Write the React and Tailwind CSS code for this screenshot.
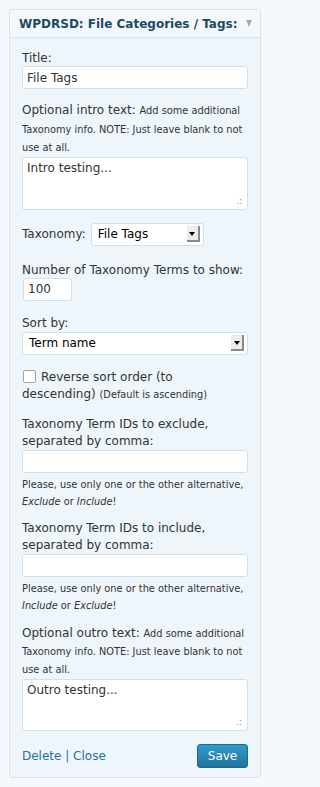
import React from "react";

const font = { fontFamily: '"DejaVu Sans", sans-serif' };

function Grip() {
  return (
    <span className="absolute bottom-[3px] right-[5px] text-[8px] leading-none text-[#777]">.:</span>
  );
}

function SelectBox({ value, className }) {
  return (
    <div className={"flex items-center rounded-[3px] border border-[#cfe0ec] bg-white pl-[6px] pr-[3px] " + className}>
      <span className="flex-1 text-[12px] leading-none text-black">{value}</span>
      <span className="relative h-[16px] w-[13px] border-b-[2px] border-r-[2px] border-b-[#8a8a8a] border-r-[#8a8a8a] bg-[#ececec]">
        <span className="absolute left-[2.5px] top-[6px] h-0 w-0 border-l-[3.5px] border-r-[3.5px] border-t-[4px] border-l-transparent border-r-transparent border-t-black" />
      </span>
    </div>
  );
}

export default function App() {
  return (
    <div className="min-h-[787px] bg-[#f5f9fd] pl-[9px] pt-[9px]" style={font}>
      <div className="w-[252px] rounded-[3px] border border-[#d6e4ee] bg-[#eef5fb] text-[12px] text-[#333]">
        <div className="flex h-[28px] items-center border-b border-[#d6e4ee] bg-[#f2f8fc] pl-[9px] pr-[8px]">
          <span className="flex-1 whitespace-nowrap text-[12px] font-bold text-[#1d4a66]">WPDRSD: File Categories / Tags:</span>
          <span className="h-0 w-0 border-l-[3.5px] border-r-[3.5px] border-t-[7px] border-l-transparent border-r-transparent border-t-[#aaa]" />
        </div>
        <div className="px-[12px] pb-[9px] pt-[12px]">
          <div className="leading-[16px]">Title:</div>
          <div className="flex h-[23px] items-center rounded-[3px] border border-[#cfe0ec] bg-white pl-[4px]">File Tags</div>

          <div className="mt-[12px] leading-[18.5px]">
            Optional intro text: <span className="text-[9.8px] leading-none">Add some additional Taxonomy info. NOTE: Just leave blank to not use at all.</span>
          </div>
          <div className="relative h-[53px] rounded-[3px] border border-[#cfe0ec] bg-white pl-[4px] pt-[2px] leading-[16px]">
            Intro testing...
            <Grip />
          </div>

          <div className="mt-[13px] flex items-center">
            <span>Taxonomy:</span>
            <SelectBox value="File Tags" className="ml-[5px] h-[23px] w-[113px]" />
          </div>

          <div className="mt-[16px] leading-[16px]">Number of Taxonomy Terms to show:</div>
          <div className="ml-px flex h-[23px] w-[49px] items-center rounded-[3px] border border-[#cfe0ec] bg-white pl-[4px]">100</div>

          <div className="mt-[14px] leading-[16px]">Sort by:</div>
          <SelectBox value="Term name" className="mt-px h-[23px] w-[226px]" />

          <div className="mt-[13px] leading-[17px]">
            <span className="mr-[5px] ml-px inline-block h-[13px] w-[13px] translate-y-[2px] rounded-[2px] border border-[#a0a0a0] bg-white" />
            Reverse sort order (to descending) <span className="text-[9.8px] leading-none">(Default is ascending)</span>
          </div>

          <div className="mt-[13px] leading-[17px]">Taxonomy Term IDs to exclude, separated by comma:</div>
          <div className="h-[23px] rounded-[3px] border border-[#cfe0ec] bg-white" />
          <div className="mt-[3px] text-[9.8px] leading-[17px]">
            Please, use only one or the other alternative, <em>Exclude</em> or <em>Include</em>!
          </div>

          <div className="mt-[10px] leading-[17px]">Taxonomy Term IDs to include, separated by comma:</div>
          <div className="h-[23px] rounded-[3px] border border-[#cfe0ec] bg-white" />
          <div className="mt-[3px] text-[9.8px] leading-[17px]">
            Please, use only one or the other alternative, <em>Include</em> or <em>Exclude</em>!
          </div>

          <div className="mt-[10px] leading-[18px]">
            Optional outro text: <span className="text-[9.8px] leading-none">Add some additional Taxonomy info. NOTE: Just leave blank to not use at all.</span>
          </div>
          <div className="relative mt-px h-[52px] rounded-[3px] border border-[#cfe0ec] bg-white pl-[4px] pt-[2px] leading-[16px]">
            Outro testing...
            <Grip />
          </div>

          <div className="mt-[13px] flex items-center justify-between">
            <div className="text-[#21759b]">
              Delete | Close
            </div>
            <button className="h-[24px] w-[51px] rounded-[3px] border border-[#1e6a8d] bg-gradient-to-b from-[#2e9bcf] to-[#21759b] text-[12px] text-white">
              Save
            </button>
          </div>
        </div>
      </div>
    </div>
  );
}
